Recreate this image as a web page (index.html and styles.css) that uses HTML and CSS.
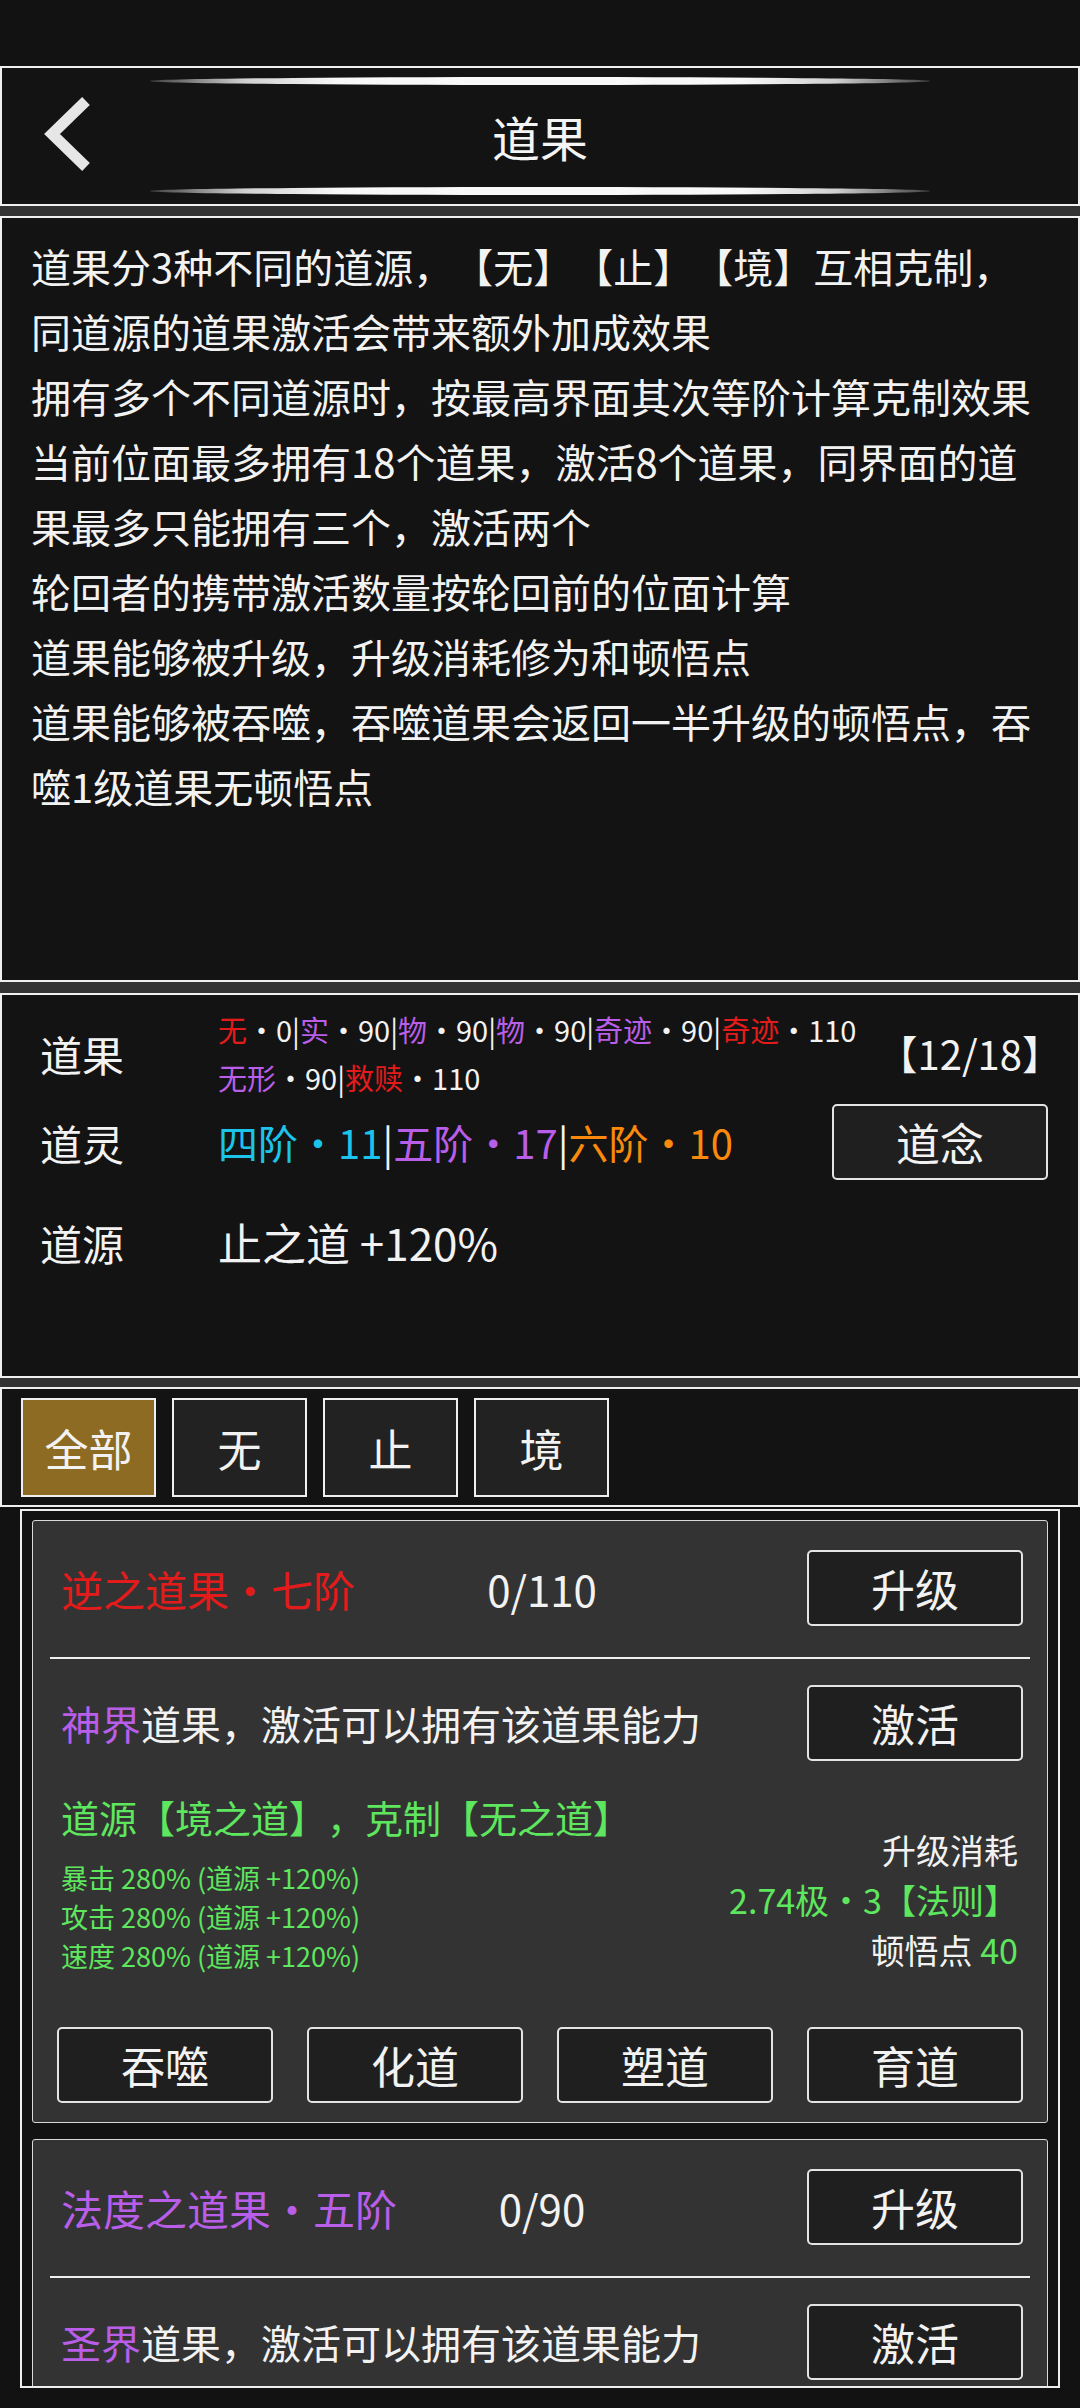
FILE: index.html
```html
<!DOCTYPE html>
<html lang="zh-CN">
<head>
<meta charset="utf-8">
<title>道果</title>
<link rel="stylesheet" href="styles.css">
</head>
<body>
<div class="status"></div>
<div class="stack">
  <header class="panel header">
    <div class="glow"></div>
    <div class="bar">
      <svg class="back" width="60" height="90" viewBox="0 0 60 90">
        <polyline points="48,10 14,43 48,76" fill="none" stroke="#e6e6e6" stroke-width="11" stroke-linejoin="miter"/>
      </svg>
      <h1 class="title">道果</h1>
      <span></span>
    </div>
    <div class="glow"></div>
  </header>

  <section class="panel intro">
    <p>道果分3种不同的道源，【无】【止】【境】互相克制，<br>同道源的道果激活会带来额外加成效果<br>拥有多个不同道源时，按最高界面其次等阶计算克制效果<br>当前位面最多拥有18个道果，激活8个道果，同界面的道<br>果最多只能拥有三个，激活两个<br>轮回者的携带激活数量按轮回前的位面计算<br>道果能够被升级，升级消耗修为和顿悟点<br>道果能够被吞噬，吞噬道果会返回一半升级的顿悟点，吞<br>噬1级道果无顿悟点</p>
  </section>

  <section class="panel summary">
    <div class="label">道果</div>
    <div class="fruits">
      <div><span class="red">无</span>·0|<span class="purple">实</span>·90|<span class="purple">物</span>·90|<span class="purple">物</span>·90|<span class="purple">奇迹</span>·90|<span class="red">奇迹</span>·110</div>
      <div><span class="purple">无形</span>·90|<span class="red">救赎</span>·110</div>
    </div>
    <div class="count">【12/18】</div>
    <div class="label">道灵</div>
    <div class="spirits"><span class="cyan">四阶·11</span>|<span class="purple">五阶·17</span>|<span class="orange">六阶·10</span></div>
    <button class="btn">道念</button>
    <div class="label">道源</div>
    <div class="source">止之道 +120%</div>
    <div></div>
  </section>

  <nav class="panel tabs">
    <div class="tab active">全部</div>
    <div class="tab">无</div>
    <div class="tab">止</div>
    <div class="tab">境</div>
  </nav>
</div>

<div class="list">
  <article class="card">
    <div class="row head">
      <span class="name red">逆之道果·七阶</span>
      <span class="progress">0/110</span>
      <button class="btn">升级</button>
    </div>
    <div class="divider"></div>
    <div class="row activate">
      <span class="desc"><span class="purple">神界</span>道果，激活可以拥有该道果能力</span>
      <button class="btn">激活</button>
    </div>
    <div class="info">
      <div class="effects">
        <div class="source-line">道源【境之道】，克制【无之道】</div>
        <div class="stat">暴击 280% (道源 +120%)</div>
        <div class="stat">攻击 280% (道源 +120%)</div>
        <div class="stat">速度 280% (道源 +120%)</div>
      </div>
      <div class="cost">
        <div>升级消耗</div>
        <div class="green">2.74极·3【法则】</div>
        <div>顿悟点 <span class="green">40</span></div>
      </div>
    </div>
    <div class="actions">
      <button class="btn">吞噬</button>
      <button class="btn">化道</button>
      <button class="btn">塑道</button>
      <button class="btn">育道</button>
    </div>
  </article>

  <article class="card">
    <div class="row head">
      <span class="name purple">法度之道果·五阶</span>
      <span class="progress">0/90</span>
      <button class="btn">升级</button>
    </div>
    <div class="divider"></div>
    <div class="row activate">
      <span class="desc"><span class="purple">圣界</span>道果，激活可以拥有该道果能力</span>
      <button class="btn">激活</button>
    </div>
  </article>
</div>
</body>
</html>
```

FILE: styles.css
```css
* { box-sizing: border-box; }
html, body { margin: 0; padding: 0; }
body {
  width: 1080px;
  height: 2408px;
  overflow: hidden;
  background: #121212;
  color: #f2f2f2;
  font-family: "Noto Sans CJK SC", "Noto Sans", sans-serif;
  text-spacing-trim: space-all;
}

.red { color: #e41b1b; }
.purple { color: #b95ee8; }
.cyan { color: #1cc4ec; }
.orange { color: #fb8a0c; }
.green { color: #5fe65f; }

.status { height: 66px; background: #121212; }

.stack { background: #333; }

.panel {
  background: #131313;
  border: 2px solid #f0f0f0;
}

/* header */
.header {
  height: 140px;
  margin-bottom: 10px;
  padding: 9px 0;
  display: flex;
  flex-direction: column;
}
.glow {
  height: 8px;
  margin: 0 148px;
  border-radius: 50%;
  background: linear-gradient(90deg, rgba(110,110,110,.5), #cfcfcf 12%, #f8f8f8 24%, #f8f8f8 76%, #cfcfcf 88%, rgba(110,110,110,.5));
}
.bar {
  flex: 1;
  display: grid;
  grid-template-columns: 1fr auto 1fr;
  align-items: center;
}
.back { display: block; margin-left: 36px; }
.title {
  margin: 0;
  font-size: 48px;
  font-weight: 400;
  color: #f4f4f4;
}

/* intro */
.intro {
  height: 766px;
  margin-bottom: 11px;
  padding: 16px 0 0 29px;
}
.intro p {
  margin: 0;
  font-size: 40px;
  line-height: 65px;
  white-space: nowrap;
}

/* summary */
.summary {
  height: 385px;
  margin-bottom: 9px;
  padding: 10px 30px 0 38px;
  display: grid;
  grid-template-columns: 178px minmax(0, 1fr) 216px;
  grid-template-rows: 96px 82px 118px;
  align-items: center;
}
.label { font-size: 42px; }
.fruits { font-size: 29px; line-height: 48px; white-space: nowrap; }
.count { font-size: 40px; justify-self: end; margin-right: -14px; }
.spirits { font-size: 40px; white-space: nowrap; }
.source { font-size: 44px; }

/* buttons */
.btn {
  width: 216px;
  height: 76px;
  padding: 0;
  background: #1f1f1f;
  border: 2px solid #e4e4e4;
  border-radius: 5px;
  color: #f2f2f2;
  font-family: inherit;
  font-size: 44px;
  line-height: 1;
}

/* tabs */
.tabs {
  height: 120px;
  padding: 9px 19px 0;
  display: flex;
  gap: 16px;
  align-items: flex-start;
}
.tab {
  width: 135px;
  height: 99px;
  border: 2px solid #f0f0f0;
  background: #222;
  display: flex;
  align-items: center;
  justify-content: center;
  font-size: 44px;
}
.tab.active { background: #8d6b23; }

/* list */
.list {
  height: 879px;
  margin: 2px 20px 0;
  border: 2px solid #eeeeee;
  padding: 9px 10px 0;
  overflow: hidden;
  background: #121212;
}
.card {
  background: #333333;
  border: 1px solid #d8d8d8;
  border-radius: 3px;
  padding: 29px 0 19px;
  margin-bottom: 16px;
}
.row {
  padding: 0 24px 0 28px;
  display: flex;
  align-items: center;
  justify-content: space-between;
}
.head {
  display: grid;
  grid-template-columns: 1fr auto 1fr;
}
.head .btn { justify-self: end; }
.name { font-size: 42px; white-space: nowrap; }
.progress { font-size: 42px; }
.divider {
  height: 2px;
  margin: 31px 17px 26px;
  background: #f0f0f0;
}
.desc { font-size: 40px; white-space: nowrap; }

.info {
  margin-top: 30px;
  padding: 0 29px 0 28px;
  display: flex;
  justify-content: space-between;
  align-items: flex-end;
}
.effects { color: #5fe65f; }
.source-line { font-size: 38px; line-height: 52px; margin-bottom: 15px; }
.stat { font-size: 27px; line-height: 39px; }
.cost { text-align: right; font-size: 34px; line-height: 50px; }

.actions {
  margin-top: 52px;
  padding: 0 24px;
  display: flex;
  justify-content: space-between;
}
```
